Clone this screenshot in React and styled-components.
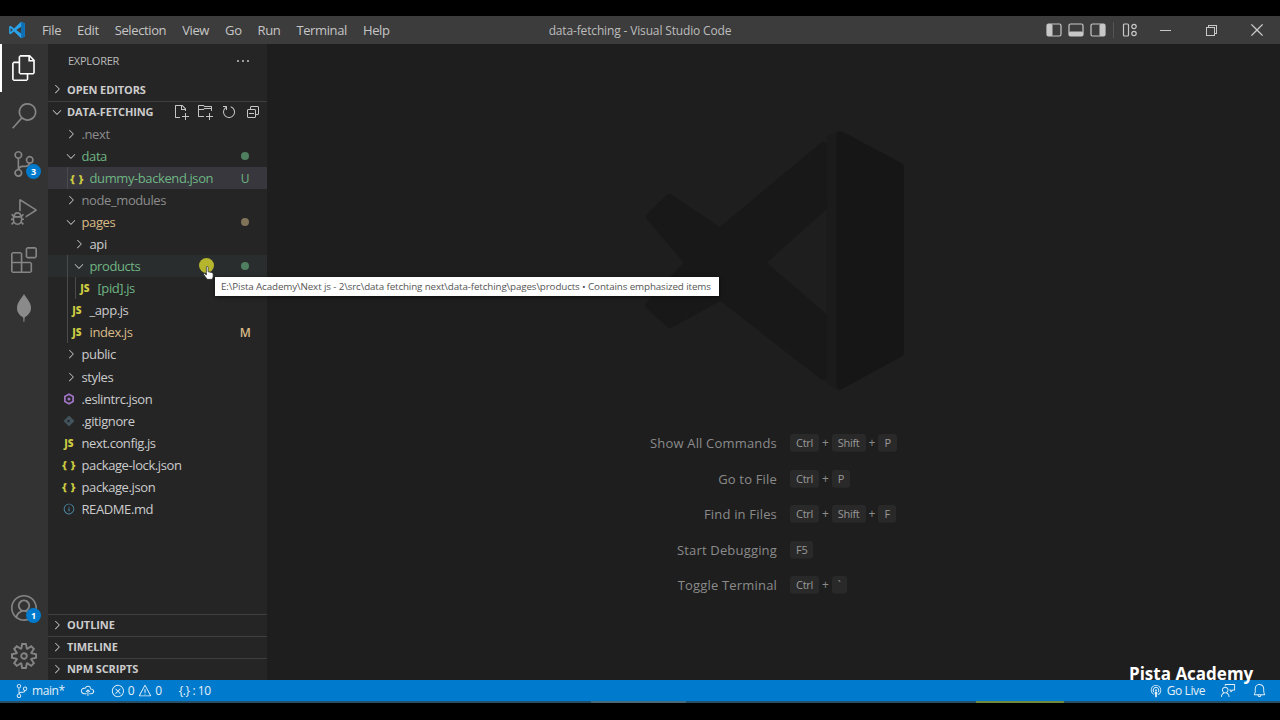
import React from 'react';
import styled, { createGlobalStyle } from 'styled-components';
import {
  VscFiles, VscSearch, VscSourceControl, VscDebugAlt, VscExtensions, VscAccount, VscSettingsGear,
  VscNewFile, VscNewFolder, VscRefresh, VscCollapseAll, VscEllipsis, VscChevronRight, VscChevronDown,
  VscCloudUpload, VscError, VscWarning, VscBell, VscFeedback, VscBroadcast, VscChromeMinimize,
  VscChromeRestore, VscChromeClose, VscInfo,
} from 'react-icons/vsc';

const font = `"Open Sans", "Noto Sans", sans-serif`;

const Global = createGlobalStyle`
  html, body { margin: 0; padding: 0; height: 720px; background: #000; overflow: hidden; }
  * { box-sizing: border-box; }
  #root { height: 720px; }
`;

const Frame = styled.div`
  position: relative;
  width: 1280px;
  height: 720px;
  padding: 16px 0 17px;
  display: flex;
  flex-direction: column;
  background: #000;
  font-family: ${font};
`;

const TitleBar = styled.div`
  height: 28px;
  display: flex;
  align-items: center;
  background: #3c3c3c;
  color: #c6c6c6;
  font-size: 13px;
  position: relative;
`;

const AppLogo = styled.div`
  width: 34px;
  display: flex;
  justify-content: center;
`;

const MenuItem = styled.span`
  padding: 0 8px;
  letter-spacing: -0.38px;
`;

const Title = styled.div`
  position: absolute;
  left: 0;
  right: 0;
  text-align: center;
  font-size: 12px;
  letter-spacing: -0.15px;
  color: #bdbdbd;
`;

const TitleActions = styled.div`
  margin-left: auto;
  display: flex;
  align-items: center;
  color: #c8c8c8;
`;

const LayoutIcons = styled.div`
  display: flex;
  align-items: center;
  gap: 6px;
  margin-right: 5px;
`;

const Divider = styled.span`
  width: 1px;
  height: 16px;
  background: #555;
  margin: 0 8px 0 2px;
`;

const WindowButton = styled.div`
  width: 46px;
  margin-left: ${({ $first }) => ($first ? '4px' : '0')};
  display: flex;
  justify-content: center;
`;

const Body = styled.div`
  flex: 1;
  min-height: 0;
  display: flex;
`;

const ActivityBar = styled.div`
  width: 48px;
  background: #333;
  display: flex;
  flex-direction: column;
  color: #858585;
`;

const ActivityItem = styled.div`
  position: relative;
  height: 48px;
  display: flex;
  align-items: center;
  justify-content: center;
  color: ${({ $active }) => ($active ? '#fff' : '#858585')};
  border-left: 2px solid ${({ $active }) => ($active ? '#fff' : 'transparent')};
  padding-right: 2px;
`;

const ActivitySpacer = styled.div`
  flex: 1;
`;

const Badge = styled.span`
  position: absolute;
  left: 24px;
  bottom: 9px;
  width: 15px;
  height: 15px;
  border-radius: 50%;
  background: #007acc;
  color: #fff;
  font-size: 9px;
  font-weight: 700;
  line-height: 15px;
  text-align: center;
`;

const SideBar = styled.div`
  width: 219px;
  background: #252526;
  display: flex;
  flex-direction: column;
  color: #ccc;
`;

const SideHeader = styled.div`
  height: 35px;
  display: flex;
  align-items: center;
  justify-content: space-between;
  padding: 0 16px 2px 20px;
  font-size: 11px;
  color: #bbb;
  letter-spacing: -0.25px;
`;

const Section = styled.div`
  height: 22px;
  display: flex;
  align-items: center;
  padding: 0 0 2px 1px;
  font-size: 11px;
  font-weight: 700;
  color: #ccc;
  letter-spacing: -0.1px;
  border-top: ${({ $line }) => ($line ? '1px solid #3f3f40' : 'none')};
`;

const SectionChevron = styled.span`
  width: 16px;
  margin-right: 2px;
  display: flex;
  justify-content: center;
`;

const SectionActions = styled.div`
  margin-left: auto;
  display: flex;
  gap: 8px;
  padding-right: 6px;
  color: #c5c5c5;
`;

const Tree = styled.div`
  flex: 1;
`;

const Row = styled.div`
  position: relative;
  height: 22.06px;
  display: flex;
  align-items: center;
  padding: 0 16px 0 ${({ $depth }) => 7 + $depth * 8}px;
  font-size: 13px;
  letter-spacing: -0.4px;
  color: ${({ $color }) => $color || '#ccc'};
  background: ${({ $bg }) => $bg || 'transparent'};
`;

const Guide = styled.span`
  position: absolute;
  top: 0;
  bottom: 0;
  left: ${({ $left }) => $left}px;
  width: 1px;
  background: #4a4a4a;
`;

const IconBox = styled.span`
  width: 16px;
  margin-right: 2.5px;
  padding-right: ${({ $file }) => ($file ? '4px' : '0')};
  display: flex;
  justify-content: center;
  align-items: center;
  color: #c5c5c5;
`;

const JsIcon = styled.span`
  font-size: 10px;
  font-weight: 800;
  color: #cbcb41;
  letter-spacing: 0;
`;

const JsonIcon = styled.span`
  font-size: 11px;
  font-weight: 800;
  color: #cbcb41;
  letter-spacing: 0.5px;
  white-space: nowrap;
`;

const Decoration = styled.span`
  margin-left: auto;
  width: 12px;
  text-align: center;
  font-size: 12px;
  font-weight: ${({ $bold }) => ($bold ? 600 : 400)};
`;

const Dot = styled.span`
  display: block;
  margin: 0 auto;
  width: 8px;
  height: 8px;
  border-radius: 50%;
  background: ${({ $color }) => $color};
`;

const Editor = styled.div`
  flex: 1;
  background: #1e1e1e;
  display: flex;
  flex-direction: column;
  align-items: center;
  padding-top: 87px;
`;

const Shortcuts = styled.div`
  width: 100%;
  margin-top: 41px;
  display: grid;
  grid-template-columns: 510px 1fr;
  column-gap: 13px;
  row-gap: 13.5px;
  align-items: center;
`;

const ShortcutLabel = styled.div`
  text-align: right;
  font-size: 13px;
  letter-spacing: 0.18px;
  color: #8b8b8b;
  line-height: 22px;
`;

const Keys = styled.div`
  display: flex;
  align-items: center;
  gap: 3px;
  color: #8b8b8b;
  font-size: 12px;
  line-height: 22px;
`;

const Key = styled.span`
  height: 18px;
  padding: 0 6px;
  line-height: 17px;
  font-size: 11px;
  letter-spacing: -0.3px;
  background: #292929;
  border-bottom: 1px solid #252525;
  border-radius: 3px;
  color: #999;
`;

const StatusBar = styled.div`
  height: 21px;
  background: #007acc;
  color: #e4f0f8;
  font-size: 12px;
  display: flex;
  align-items: center;
  padding: 0 13px 0 15px;
  letter-spacing: -0.4px;
`;

const StatusItem = styled.span`
  display: flex;
  align-items: center;
  gap: ${({ $gap }) => $gap ?? 3}px;
  margin-right: ${({ $mr }) => $mr ?? 0}px;
`;

const StatusRight = styled.div`
  margin-left: auto;
  display: flex;
  align-items: center;
  gap: 16px;
`;

const Progress = styled.div`
  height: 2px;
  background: linear-gradient(to right, #24506a 0, #24506a 591px, #4a6a7a 591px, #4a6a7a 686px, #24506a 686px, #24506a 976px, #6f8a3a 976px, #6f8a3a 1064px, #24506a 1064px);
`;

const Tooltip = styled.div`
  position: absolute;
  left: 215px;
  top: 277px;
  width: 504px;
  height: 19px;
  padding-left: 6px;
  background: #fff;
  box-shadow: 0 1px 4px rgba(0, 0, 0, 0.6);
  color: #555;
  font-size: 9.8px;
  line-height: 19px;
  white-space: nowrap;
  letter-spacing: -0.12px;
`;

const CursorHalo = styled.div`
  position: absolute;
  left: 199px;
  top: 258px;
  width: 15px;
  height: 15px;
  border-radius: 50%;
  background: #b5b52e;
`;

const CursorHand = styled.svg`
  position: absolute;
  left: 203px;
  top: 265px;
`;

const Watermark = styled.div`
  position: absolute;
  left: 1129px;
  top: 663px;
  font-size: 17px;
  font-weight: 700;
  color: #fff;
  line-height: 22px;
  white-space: nowrap;
`;

const VsLogo = () => (
  <svg width="18" height="18" viewBox="0 0 24 24">
    <path fill="#2aa3ea" d="M17.5 1 8 10 3.5 6.4 1.5 7.4v9.2l2 1L8 14l9.500 9 5-2.400V3.400z" />
    <path fill="#0e6fb5" d="M17.5 1l5 2.400v17.200l-5 2.400z" />
    <path fill="#3c3c3c" d="M17.500 7.500 11 12l6.500 4.500zM3.500 9.300v5.400L6.300 12z" />
  </svg>
);

const LayoutIcon = ({ part }) => (
  <svg width="16" height="16" viewBox="0 0 16 16">
    <rect x="1" y="2" width="14" height="12" rx="1.500" fill="none" stroke="#c8c8c8" strokeWidth="1.200" />
    {part === 'left' && <rect x="1" y="2" width="5.500" height="12" rx="1.500" fill="#c8c8c8" />}
    {part === 'bottom' && <rect x="1" y="9.500" width="14" height="4.500" rx="1.500" fill="#c8c8c8" />}
    {part === 'right' && <rect x="9.500" y="2" width="5.500" height="12" rx="1.500" fill="#c8c8c8" />}
  </svg>
);

const CustomizeIcon = () => (
  <svg width="16" height="16" viewBox="0 0 16 16" fill="none" stroke="#c8c8c8" strokeWidth="1.200">
    <rect x="1.500" y="2" width="5" height="12" rx="1" />
    <circle cx="12" cy="4.500" r="2.200" />
    <circle cx="12" cy="11.500" r="2.200" />
  </svg>
);

const LeafIcon = () => (
  <svg width="16" height="30" viewBox="0 0 16 30">
    <path fill="#8a8a8a" d="M8 1C10 5 15 9 15 15c0 5-4 8-6.300 9.500L8.300 29h-.8l-.3-4.500C4.500 23 1 20 1 15 1 9 6 5 8 1z" />
  </svg>
);

const EslintIcon = () => (
  <svg width="14" height="14" viewBox="0 0 14 14">
    <path fill="none" stroke="#a074c4" strokeWidth="2" d="M7 1.500 11.800 4.200v5.600L7 12.500 2.200 9.800V4.200z" />
    <circle cx="7" cy="7" r="1.800" fill="#a074c4" />
  </svg>
);

const GitIcon = () => (
  <svg width="12" height="12" viewBox="0 0 12 12">
    <path fill="#41535b" d="M6 .5 11.500 6 6 11.500.5 6z" />
    <circle cx="5.500" cy="6" r="1.200" fill="#252526" />
  </svg>
);

const Chevron = ({ open }) => (open ? <VscChevronDown size={14} /> : <VscChevronRight size={14} />);

const greenText = '#6fb583';
const amberText = '#d9bb87';
const dimText = '#8c8c8c';

const tree = [
  { name: '.next', depth: 1, folder: true, color: dimText },
  { name: 'data', depth: 1, folder: true, open: true, color: greenText, dot: '#4f7f60' },
  { name: 'dummy-backend.json', depth: 2, icon: 'json', color: greenText, deco: 'U', bg: '#37373d', guides: [19] },
  { name: 'node_modules', depth: 1, folder: true, color: dimText },
  { name: 'pages', depth: 1, folder: true, open: true, color: amberText, dot: '#7f7458' },
  { name: 'api', depth: 2, folder: true },
  { name: 'products', depth: 2, folder: true, open: true, color: greenText, dot: '#4f7f60', bg: '#2a2d2e', guides: [19] },
  { name: '[pid].js', depth: 3, icon: 'js', color: greenText, guides: [19, 27] },
  { name: '_app.js', depth: 2, icon: 'js', guides: [19] },
  { name: 'index.js', depth: 2, icon: 'js', color: amberText, deco: 'M', guides: [19] },
  { name: 'public', depth: 1, folder: true },
  { name: 'styles', depth: 1, folder: true },
  { name: '.eslintrc.json', depth: 1, icon: 'eslint' },
  { name: '.gitignore', depth: 1, icon: 'git' },
  { name: 'next.config.js', depth: 1, icon: 'js' },
  { name: 'package-lock.json', depth: 1, icon: 'json' },
  { name: 'package.json', depth: 1, icon: 'json' },
  { name: 'README.md', depth: 1, icon: 'info' },
];

const fileIcon = (icon) => {
  if (icon === 'js') return <JsIcon>JS</JsIcon>;
  if (icon === 'json') return <JsonIcon>{'{ }'}</JsonIcon>;
  if (icon === 'eslint') return <EslintIcon />;
  if (icon === 'git') return <GitIcon />;
  return <VscInfo size={14} color="#519aba" />;
};

const shortcuts = [
  ['Show All Commands', ['Ctrl', 'Shift', 'P']],
  ['Go to File', ['Ctrl', 'P']],
  ['Find in Files', ['Ctrl', 'Shift', 'F']],
  ['Start Debugging', ['F5']],
  ['Toggle Terminal', ['Ctrl', '`']],
];

export default function App() {
  return (
    <Frame>
      <Global />
      <TitleBar>
        <AppLogo><VsLogo /></AppLogo>
        {['File', 'Edit', 'Selection', 'View', 'Go', 'Run', 'Terminal', 'Help'].map((m) => (
          <MenuItem key={m}>{m}</MenuItem>
        ))}
        <Title>data-fetching - Visual Studio Code</Title>
        <TitleActions>
          <LayoutIcons>
            <LayoutIcon part="left" />
            <LayoutIcon part="bottom" />
            <LayoutIcon part="right" />
          </LayoutIcons>
          <Divider />
          <CustomizeIcon />
          <WindowButton $first><VscChromeMinimize size={16} /></WindowButton>
          <WindowButton><VscChromeRestore size={16} /></WindowButton>
          <WindowButton><VscChromeClose size={18} /></WindowButton>
        </TitleActions>
      </TitleBar>
      <Body>
        <ActivityBar>
          <ActivityItem $active><VscFiles size={26} /></ActivityItem>
          <ActivityItem><VscSearch size={26} /></ActivityItem>
          <ActivityItem><VscSourceControl size={26} /><Badge>3</Badge></ActivityItem>
          <ActivityItem><VscDebugAlt size={26} /></ActivityItem>
          <ActivityItem><VscExtensions size={26} /></ActivityItem>
          <ActivityItem><LeafIcon /></ActivityItem>
          <ActivitySpacer />
          <ActivityItem><VscAccount size={26} /><Badge>1</Badge></ActivityItem>
          <ActivityItem><VscSettingsGear size={26} /></ActivityItem>
        </ActivityBar>
        <SideBar>
          <SideHeader>
            <span>EXPLORER</span>
            <VscEllipsis size={16} color="#c5c5c5" />
          </SideHeader>
          <Section>
            <SectionChevron><Chevron /></SectionChevron>
            OPEN EDITORS
          </Section>
          <Section $line>
            <SectionChevron><Chevron open /></SectionChevron>
            DATA-FETCHING
            <SectionActions>
              <VscNewFile size={16} />
              <VscNewFolder size={16} />
              <VscRefresh size={16} />
              <VscCollapseAll size={16} />
            </SectionActions>
          </Section>
          <Tree>
            {tree.map((item) => (
              <Row key={item.name} $depth={item.depth} $color={item.color} $bg={item.bg}>
                {item.guides && item.guides.map((g) => <Guide key={g} $left={g} />)}
                <IconBox $file={!item.folder}>{item.folder ? <Chevron open={item.open} /> : fileIcon(item.icon)}</IconBox>
                {item.name}
                {item.dot && <Decoration><Dot $color={item.dot} /></Decoration>}
                {item.deco && <Decoration $bold={item.deco === 'M'}>{item.deco}</Decoration>}
              </Row>
            ))}
          </Tree>
          <Section $line><SectionChevron><Chevron /></SectionChevron>OUTLINE</Section>
          <Section $line><SectionChevron><Chevron /></SectionChevron>TIMELINE</Section>
          <Section $line><SectionChevron><Chevron /></SectionChevron>NPM SCRIPTS</Section>
        </SideBar>
        <Editor>
          <svg width="260" height="260" viewBox="70 35 780 780">
            <path fill="#1b1b1b" stroke="#1b1b1b" strokeWidth="10" strokeLinejoin="round" d="M622 55 655 42V808L622 790z" />
            <path fill="#161616" stroke="#161616" strokeWidth="24" strokeLinejoin="round" d="M660 48 838 142V700L660 798z" />
            <path fill="#181818" stroke="#181818" strokeWidth="24" strokeLinejoin="round" d="M608 80V262L420 430 608 592V770L300 530 148 615 86 558 205 430 88 292 146 236 298 338z" />
          </svg>
          <Shortcuts>
            {shortcuts.map(([label, keys]) => (
              <React.Fragment key={label}>
                <ShortcutLabel>{label}</ShortcutLabel>
                <Keys>
                  {keys.map((k, i) => (
                    <React.Fragment key={k}>
                      {i > 0 && <span>+</span>}
                      <Key>{k}</Key>
                    </React.Fragment>
                  ))}
                </Keys>
              </React.Fragment>
            ))}
          </Shortcuts>
        </Editor>
      </Body>
      <StatusBar>
        <StatusItem $mr={15}><VscSourceControl size={14} />main*</StatusItem>
        <StatusItem $mr={16}><VscCloudUpload size={15} /></StatusItem>
        <StatusItem $mr={4} $gap={3}><VscError size={14} />0</StatusItem>
        <StatusItem $mr={17} $gap={3}><VscWarning size={14} />0</StatusItem>
        <StatusItem>{'{.}'} : 10</StatusItem>
        <StatusRight>
          <StatusItem $gap={4}><VscBroadcast size={14} />Go Live</StatusItem>
          <VscFeedback size={15} />
          <VscBell size={15} />
        </StatusRight>
      </StatusBar>
      <Progress />
      <CursorHalo />
      <CursorHand width="11" height="16" viewBox="0 0 13 17">
        <path fill="#fff" stroke="#222" strokeWidth="0.800" d="M4 1.500c0-1 2-1 2 0V7l4 .8c1 .2 2 .8 2 2V13l-1 3H5L1 10.500c-.5-1 .8-1.800 1.500-1L4 11z" />
      </CursorHand>
      <Tooltip>E:\Pista Academy\Next js - 2\src\data fetching next\data-fetching\pages\products • Contains emphasized items</Tooltip>
      <Watermark>Pista Academy</Watermark>
    </Frame>
  );
}
